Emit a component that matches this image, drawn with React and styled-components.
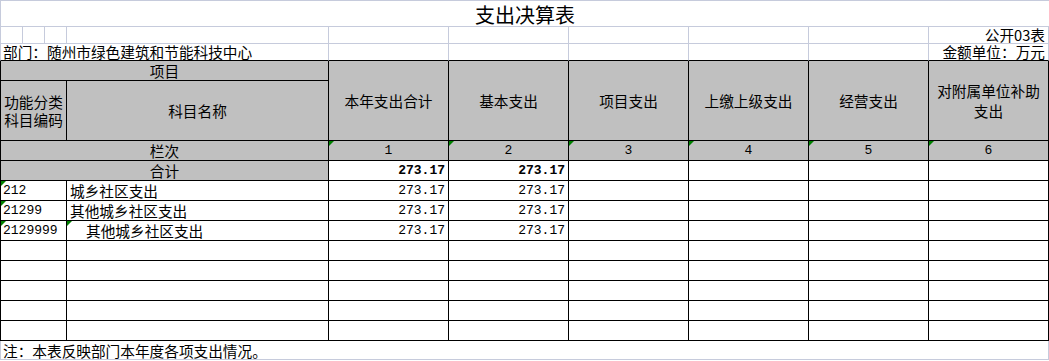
import React from 'react';
import styled, { createGlobalStyle, css } from 'styled-components';

const GRID = '#c6cbdc';
const INK = '#000';
const HEAD = '#c0c0c0';

const GlobalStyle = createGlobalStyle`
  html, body {
    margin: 0;
    padding: 0;
    background: #fff;
  }
  body {
    font-family: "Noto Sans CJK SC", "Noto Sans", sans-serif;
    color: #000;
  }
`;

const Sheet = styled.div`
  display: grid;
  grid-template-columns: 23px 22px 22px 262px repeat(6, 120px);
  grid-template-rows: 27px 17px 17px 20px 60px repeat(10, 20px) 19px;
  width: 1049px;
  font-size: 14.67px;
`;

const Title = styled.div`
  grid-column: 1 / -1;
  box-sizing: border-box;
  border-top: 1px solid ${GRID};
  border-bottom: 1px solid ${GRID};
  border-left: 1px solid ${GRID};
  display: flex;
  align-items: center;
  justify-content: center;
  font-size: 20px;
  line-height: 22px;
  padding-top: 2px;
`;

const flag = css`
  &::before {
    content: '';
    position: absolute;
    top: 0;
    left: 0;
    border-top: 5px solid #008000;
    border-right: 5px solid transparent;
  }
`;

const Cell = styled.div`
  box-sizing: border-box;
  position: relative;
  display: flex;
  align-items: ${p => (p.$valign === 'end' ? 'flex-end' : 'center')};
  justify-content: ${p =>
    p.$align === 'right' ? 'flex-end' : p.$align === 'left' ? 'flex-start' : 'center'};
  grid-column: ${p => p.$col || 'auto'};
  grid-row: ${p => p.$row || 'auto'};
  border-right: 1px solid ${p => (p.$ink ? INK : GRID)};
  border-bottom: 1px solid ${p => (p.$ink || p.$inkBottom ? INK : GRID)};
  border-left: ${p => (p.$first ? `1px solid ${p.$ink ? INK : GRID}` : 'none')};
  background: ${p => (p.$head ? HEAD : '#fff')};
  padding: 0 ${p => (p.$align === 'right' ? '3px' : '2px')} 0 ${p => p.$indent || '2px'};
  white-space: nowrap;
  line-height: 17px;
  text-align: center;
  overflow: visible;
  ${p => p.$mono && css`
    font-family: "Liberation Mono", "Noto Sans CJK SC", monospace;
    font-size: 13px;
  `}
  ${p => p.$bold && css`font-weight: bold;`}
  ${p => p.$flag && flag}
`;

const Lines = styled.span`
  display: block;
  line-height: ${p => p.$lh || '20px'};
`;

const Note = styled.div`
  grid-column: 1 / -1;
  box-sizing: border-box;
  border-left: 1px solid ${GRID};
  border-right: 1px solid ${GRID};
  border-bottom: 1px solid ${GRID};
  display: flex;
  align-items: center;
  padding-left: 2px;
  line-height: 17px;
  white-space: nowrap;
`;

const columns = [
  '本年支出合计',
  '基本支出',
  '项目支出',
  '上缴上级支出',
  '经营支出',
  ['对附属单位补助', '支出'],
];

const rows = [
  { code: '212', name: '城乡社区支出', total: '273.17', basic: '273.17' },
  { code: '21299', name: '其他城乡社区支出', total: '273.17', basic: '273.17' },
  { code: '2129999', name: '其他城乡社区支出', total: '273.17', basic: '273.17', sub: true },
  {}, {}, {}, {}, {},
];

const sixEmpty = [0, 1, 2, 3, 4];

export default function App() {
  return (
    <>
      <GlobalStyle />
      <Sheet>
        <Title>支出决算表</Title>

        <Cell $first />
        <Cell />
        <Cell />
        <Cell />
        {sixEmpty.map(i => <Cell key={i} />)}
        <Cell $align="right" $valign="end">公开03表</Cell>

        <Cell $col="1 / 5" $first $inkBottom $align="left" $valign="end">
          部门：随州市绿色建筑和节能科技中心
        </Cell>
        {sixEmpty.map(i => <Cell key={i} $inkBottom />)}
        <Cell $align="right" $valign="end" $inkBottom>金额单位：万元</Cell>

        <Cell $col="1 / 5" $row="4" $first $ink $head>
          <Lines>项目</Lines>
        </Cell>
        <Cell $col="1 / 4" $row="5" $first $ink $head>
          <Lines $lh="18px">功能分类<br />科目编码</Lines>
        </Cell>
        <Cell $col="4 / 5" $row="5" $ink $head>
          <Lines>科目名称</Lines>
        </Cell>
        {columns.map((c, i) => (
          <Cell key={i} $col={`${5 + i}`} $row="4 / 6" $ink $head>
            <Lines>
              {Array.isArray(c) ? (
                <>
                  {c[0]}
                  <br />
                  {c[1]}
                </>
              ) : (
                c
              )}
            </Lines>
          </Cell>
        ))}

        <Cell $col="1 / 5" $first $ink $head>栏次</Cell>
        {[1, 2, 3, 4, 5, 6].map(n => (
          <Cell key={n} $ink $head $flag $mono>{n}</Cell>
        ))}

        <Cell $col="1 / 5" $first $ink $head>合计</Cell>
        <Cell $ink $mono $bold $align="right">273.17</Cell>
        <Cell $ink $mono $bold $align="right">273.17</Cell>
        {[0, 1, 2, 3].map(i => <Cell key={i} $ink />)}

        {rows.map((r, i) => (
          <React.Fragment key={i}>
            <Cell $col="1 / 4" $first $ink $mono $align="left" $flag={!!r.code}>
              {r.code}
            </Cell>
            <Cell $ink $align="left" $flag={r.sub} $indent={r.sub ? '19px' : '3px'}>
              {r.name}
            </Cell>
            <Cell $ink $mono $align="right">{r.total}</Cell>
            <Cell $ink $mono $align="right">{r.basic}</Cell>
            {[0, 1, 2, 3].map(j => <Cell key={j} $ink />)}
          </React.Fragment>
        ))}

        <Note>注：本表反映部门本年度各项支出情况。</Note>
      </Sheet>
    </>
  );
}
